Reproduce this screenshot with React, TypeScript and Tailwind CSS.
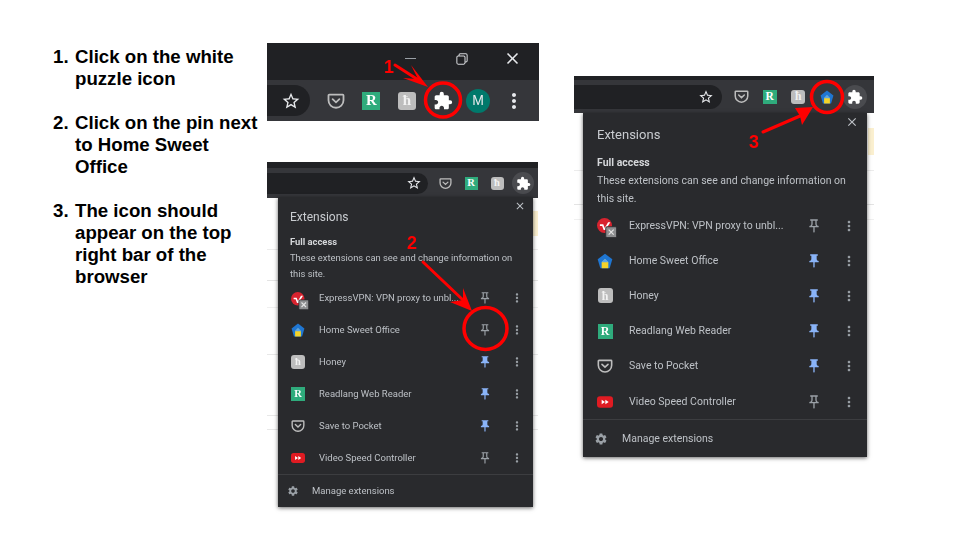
import {
  MdClose,
  MdExtension,
  MdMoreVert,
  MdOutlinePushPin,
  MdPushPin,
  MdSettings,
  MdStarBorder,
} from "react-icons/md";

type IconProps = { className?: string };

const PocketIcon = ({ className }: IconProps) => (
  <svg viewBox="0 0 24 24" className={className} fill="none">
    <path
      d="M3 3.500h18a1 1 0 0 1 1 1V11a10 10 0 0 1-20 0V4.500a1 1 0 0 1 1-1z"
      stroke="#bdbdbd"
      strokeWidth="2.400"
    />
    <path d="M7.500 9.500 12 13.800l4.500-4.300" stroke="#bdbdbd" strokeWidth="2.400" strokeLinecap="round" />
  </svg>
);

const ReadlangIcon = ({ className }: IconProps) => (
  <div className={`flex items-center justify-center bg-[#2fab7c] font-['Liberation_Serif',serif] font-bold leading-none text-white ${className}`}>
    R
  </div>
);

const HoneyIcon = ({ className }: IconProps) => (
  <div className={`flex items-center justify-center rounded-[3px] bg-[#bdbdbd] font-['Liberation_Serif',serif] font-bold leading-none text-[#f2f2f2] ${className}`}>
    ħ
  </div>
);

const HomeIcon = ({ className }: IconProps) => (
  <svg viewBox="0 0 24 24" className={className}>
    <path d="M12 1 23 9.500 19 23H5L1 9.500z" fill="#1f76d2" />
    <path d="M12 9 17 14v9H7v-9z" fill="#f5d328" />
    <path d="M12 8.500 17.500 14H6.500z" fill="#5aa5e8" />
  </svg>
);

const ExpressIcon = ({ className }: IconProps) => (
  <svg viewBox="0 0 24 24" className={className}>
    <circle cx="9" cy="9" r="9" fill="#d8232f" />
    <path d="M3.500 7.500h4l1.800 4.500 4-7h2.700l-6 9.500H8L6.200 9.500H3.500z" fill="#ffffff" />
    <rect x="10.500" y="10.500" width="13" height="13" rx="1.500" fill="#8d8e90" stroke="#292a2d" />
    <path d="M14 14l6 6m0-6-6 6" stroke="#e3e3e3" strokeWidth="1.500" />
  </svg>
);

const VideoIcon = ({ className }: IconProps) => (
  <svg viewBox="0 0 24 24" className={className}>
    <rect x="0" y="3.500" width="24" height="17" rx="4.500" fill="#e01b22" />
    <path d="M7 8.500 12 12l-5 3.500zM12.500 8.500l5 3.500-5 3.500z" fill="#ffffff" />
  </svg>
);

const RestoreIcon = ({ className }: IconProps) => (
  <svg viewBox="0 0 14 14" className={className} fill="none" stroke="#d5d7da" strokeWidth="1.200">
    <rect x="1" y="3.500" width="9.500" height="9.500" rx="1.500" />
    <path d="M3.500 3.500V2.500a1.500 1.500 0 0 1 1.500-1.500h6.500A1.500 1.500 0 0 1 13 2.500V9a1.500 1.500 0 0 1-1.500 1.500h-1" />
  </svg>
);

const sizes = {
  small: {
    panel: "w-[255px] h-[310px]",
    head: "pl-3 pt-3",
    title: "h-4 text-[12px] leading-4",
    access: "mt-[9px] h-4 text-[9.400px] leading-4",
    desc: "w-[235px] text-[9.400px] leading-4",
    row: "h-8 pl-[13px] pr-[9px]",
    cell: "w-[14px]",
    icon: "w-[14px] h-[14px]",
    express: "w-[18px] h-[18px] max-w-[18px] -mr-1 mt-[5px]",
    fontIcon: "w-[14px] h-[14px] text-[10.500px]",
    label: "ml-[14px] text-[9.500px]",
    pin: "w-[14px] h-[14px]",
    dots: "ml-[18px] w-[14px] h-[14px]",
    manage: "h-[33px] pl-[9px]",
    gear: "w-[12px] h-[12px]",
    manageLabel: "ml-[13px] text-[9.500px]",
    close: "right-[7px] top-[3px] w-3 h-3",
  },
  large: {
    panel: "w-[284px] h-[344px]",
    head: "pl-[14px] pt-[13px]",
    title: "h-[18px] text-[13px] leading-[18px]",
    access: "mt-[10px] h-[18px] text-[10.500px] leading-[18px]",
    desc: "w-[262px] text-[10.500px] leading-[18px]",
    row: "h-[35.200px] pl-[14px] pr-[10px]",
    cell: "w-4",
    icon: "w-4 h-4",
    express: "w-5 h-5 max-w-5 -mr-1 mt-[5px]",
    fontIcon: "w-[15px] h-[15px] text-[12px]",
    label: "ml-4 text-[10.500px]",
    pin: "w-4 h-4",
    dots: "ml-[19px] w-4 h-4",
    manage: "h-[37px] pl-[11px]",
    gear: "w-[14px] h-[14px]",
    manageLabel: "ml-[14px] text-[10.500px]",
    close: "right-[8px] top-[2px] w-[14px] h-[14px]",
  },
};

type Size = typeof sizes.small;

const rows = [
  { name: "ExpressVPN: VPN proxy to unbl...", kind: "express" },
  { name: "Home Sweet Office", kind: "home" },
  { name: "Honey", kind: "honey" },
  { name: "Readlang Web Reader", kind: "readlang" },
  { name: "Save to Pocket", kind: "pocket" },
  { name: "Video Speed Controller", kind: "video" },
];

function RowIcon({ kind, s }: { kind: string; s: Size }) {
  if (kind === "express") return <ExpressIcon className={`shrink-0 ${s.express}`} />;
  if (kind === "home") return <HomeIcon className={s.icon} />;
  if (kind === "honey") return <HoneyIcon className={s.fontIcon} />;
  if (kind === "readlang") return <ReadlangIcon className={s.fontIcon} />;
  if (kind === "pocket") return <PocketIcon className={s.icon} />;
  return <VideoIcon className={s.icon} />;
}

function Panel({ s, pinned }: { s: Size; pinned: string[] }) {
  return (
    <div className={`relative flex flex-col bg-[#292a2d] font-['Roboto',sans-serif] text-[#bdc1c6] shadow-[0_1px_4px_rgba(0,0,0,0.6)] ${s.panel}`}>
      <MdClose className={`absolute text-[#bdc1c6] ${s.close}`} />
      <div className={s.head}>
        <div className={`text-[#c9ccd0] ${s.title}`}>Extensions</div>
        <div className={`font-bold text-[#d5d7da] ${s.access}`}>Full access</div>
        <div className={s.desc}>These extensions can see and change information on this site.</div>
      </div>
      <div className="flex flex-col border-b border-[#3c3d40]">
        {rows.map((r) => (
          <div key={r.kind} className={`flex items-center ${s.row}`}>
            <div className={`flex shrink-0 items-center justify-center ${s.cell}`}>
              <RowIcon kind={r.kind} s={s} />
            </div>
            <span className={`flex-1 whitespace-nowrap ${s.label}`}>{r.name}</span>
            {pinned.includes(r.kind) ? (
              <MdPushPin className={`text-[#8ab4f8] ${s.pin}`} />
            ) : (
              <MdOutlinePushPin className={`text-[#9aa0a6] ${s.pin}`} />
            )}
            <MdMoreVert className={`text-[#9aa0a6] ${s.dots}`} />
          </div>
        ))}
      </div>
      <div className={`flex items-center ${s.manage}`}>
        <MdSettings className={`text-[#9aa0a6] ${s.gear}`} />
        <span className={s.manageLabel}>Manage extensions</span>
      </div>
    </div>
  );
}

export default function App() {
  return (
    <div className="relative h-[540px] w-[960px] overflow-hidden bg-white font-['Liberation_Sans',sans-serif]">
      {/* Steps */}
      <ol className="flex flex-col gap-[22px] pl-[53px] pt-[46px] text-[18.670px] font-bold leading-[22px] text-black">
        <li className="flex">
          <span className="w-[22px] shrink-0">1.</span>
          <span>
            Click on the white
            <br />
            puzzle icon
          </span>
        </li>
        <li className="flex">
          <span className="w-[22px] shrink-0">2.</span>
          <span>
            Click on the pin next
            <br />
            to Home Sweet
            <br />
            Office
          </span>
        </li>
        <li className="flex">
          <span className="w-[22px] shrink-0">3.</span>
          <span>
            The icon should
            <br />
            appear on the top
            <br />
            right bar of the
            <br />
            browser
          </span>
        </li>
      </ol>

      {/* Screenshot 1: window controls and toolbar */}
      <div className="absolute left-[267px] top-[43px] w-[272px] blur-[0.5px]">
        <div className="flex h-[37px] items-center justify-end bg-[#202124] pb-[6px] pr-[1px]">
          <div className="flex w-[51px] justify-center">
            <div className="h-[1.500px] w-[11px] bg-[#9aa0a6]" />
          </div>
          <div className="flex w-[51px] justify-center">
            <RestoreIcon className="h-3 w-3" />
          </div>
          <div className="flex w-[51px] justify-center">
            <MdClose className="h-[19px] w-[19px] text-[#e8eaed]" />
          </div>
        </div>
        <div className="flex h-[41px] items-center bg-[#35363a]">
          <div className="flex h-[31px] w-[43px] items-center justify-end rounded-r-full bg-[#202124] pr-[9px]">
            <MdStarBorder className="h-5 w-5 text-[#e8eaed]" />
          </div>
          <div className="ml-2 flex w-[35.600px] justify-center">
            <PocketIcon className="h-[18px] w-[18px]" />
          </div>
          <div className="flex w-[35.600px] justify-center">
            <ReadlangIcon className="h-[18px] w-[18px] text-[15px]" />
          </div>
          <div className="flex w-[35.600px] justify-center">
            <HoneyIcon className="h-[18px] w-[18px] text-[15px]" />
          </div>
          <div className="flex w-[35.600px] justify-center">
            <MdExtension className="h-5 w-5 text-white" />
          </div>
          <div className="flex w-[35.600px] justify-center">
            <div className="flex h-6 w-6 items-center justify-center rounded-full bg-[#00796b] text-[14px] text-[#e8eaed]">M</div>
          </div>
          <div className="flex w-[35.600px] justify-center">
            <MdMoreVert className="h-6 w-6 text-[#e8eaed]" />
          </div>
        </div>
      </div>

      {/* Screenshot 2: menu with unpinned Home Sweet Office */}
      <div className="absolute left-[267px] top-[162px] h-[346px] w-[271px] blur-[0.5px]">
        <div className="h-[6px] bg-[#202124]" />
        <div className="flex h-[30px] items-center bg-[#35363a]">
          <div className="flex h-[21px] w-[161px] items-center justify-end rounded-r-full bg-[#202124] pr-[6px]">
            <MdStarBorder className="h-4 w-4 text-[#e8eaed]" />
          </div>
          <div className="ml-1 flex w-[26px] justify-center">
            <PocketIcon className="h-[13px] w-[13px]" />
          </div>
          <div className="flex w-[26px] justify-center">
            <ReadlangIcon className="h-[13px] w-[13px] text-[10.500px]" />
          </div>
          <div className="flex w-[26px] justify-center">
            <HoneyIcon className="h-[13px] w-[13px] text-[10.500px]" />
          </div>
          <div className="flex w-[26px] justify-center">
            <div className="flex h-[22px] w-[22px] items-center justify-center rounded-full bg-[#4a4b4f]">
              <MdExtension className="h-[15px] w-[15px] text-white" />
            </div>
          </div>
        </div>
        {/* faint page lines behind the menu */}
        <div className="absolute left-0 top-[87px] h-px w-full bg-[#ececec]" />
        <div className="absolute left-0 top-[118px] h-px w-full bg-[#e4e4e4]" />
        <div className="absolute left-0 top-[145px] h-px w-full bg-[#f0f0f0]" />
        <div className="absolute left-0 top-[192px] h-px w-full bg-[#e8e8e8]" />
        <div className="absolute left-0 top-[253px] h-px w-full bg-[#e8e8e8]" />
        <div className="absolute left-0 top-[267px] h-px w-full bg-[#e8e8e8]" />
        <div className="absolute right-0 top-[49px] h-[25px] w-[5px] bg-[#fbf0d0]" />
        <div className="relative -mt-px ml-[11px]">
          <Panel s={sizes.small} pinned={["honey", "readlang", "pocket"]} />
        </div>
      </div>

      {/* Screenshot 3: menu with the icon pinned to the toolbar */}
      <div className="absolute left-[574px] top-[76px] h-[382px] w-[300px] blur-[0.5px]">
        <div className="h-1 bg-[#202124]" />
        <div className="flex h-[33px] items-center bg-[#35363a]">
          <div className="flex h-6 w-[148px] items-center justify-end rounded-r-full bg-[#202124] pr-2">
            <MdStarBorder className="h-4 w-4 text-[#e8eaed]" />
          </div>
          <div className="ml-[5px] flex w-[28.500px] justify-center">
            <PocketIcon className="h-[15px] w-[15px]" />
          </div>
          <div className="flex w-[28.500px] justify-center">
            <ReadlangIcon className="h-[14px] w-[14px] text-[11.500px]" />
          </div>
          <div className="flex w-[28.500px] justify-center">
            <HoneyIcon className="h-[14px] w-[14px] text-[11.500px]" />
          </div>
          <div className="flex w-[28.500px] justify-center">
            <HomeIcon className="h-[14px] w-[14px]" />
          </div>
          <div className="flex w-[28.500px] justify-center">
            <div className="flex h-[24px] w-[24px] items-center justify-center rounded-full bg-[#4a4b4f]">
              <MdExtension className="h-[16px] w-[16px] text-white" />
            </div>
          </div>
        </div>
        <div className="absolute left-0 top-[94px] h-px w-full bg-[#ececec]" />
        <div className="absolute left-0 top-[128px] h-px w-full bg-[#e4e4e4]" />
        <div className="absolute left-0 top-[143px] h-px w-full bg-[#f0f0f0]" />
        <div className="absolute right-0 top-[52px] h-[27px] w-[6px] bg-[#fbf0d0]" />
        <div className="relative ml-[9px]">
          <Panel s={sizes.large} pinned={["home", "honey", "readlang", "pocket"]} />
        </div>
      </div>

      {/* Red annotations */}
      <svg className="absolute left-0 top-0 h-[540px] w-[960px]" viewBox="0 0 960 540" fill="none">
        <g stroke="#ff0000" strokeWidth="3.500">
          <ellipse cx="443" cy="100" rx="17.500" ry="17" />
          <ellipse cx="485.500" cy="328.500" rx="21.500" ry="21" />
          <ellipse cx="827" cy="97" rx="15.500" ry="15.500" />
        </g>
        <g stroke="#ff0000" strokeWidth="3" strokeLinecap="round">
          <path d="M395 65 420 81" />
          <path d="M423 262 463 300" />
          <path d="M763 132 800 116" />
        </g>
        <g fill="#ff0000">
          <path d="M428 87 411 65 418 79 403 78z" />
          <path d="M472 311 463 288 463 300 450 302z" />
          <path d="M813 107 795 108 800 116 802 125z" />
        </g>
      </svg>
      <span className="absolute left-[384px] top-[57px] text-[18px] font-bold leading-[20px] text-[#ff0000]">1</span>
      <span className="absolute left-[407px] top-[233px] text-[18px] font-bold leading-[20px] text-[#ff0000]">2</span>
      <span className="absolute left-[749px] top-[132px] text-[18px] font-bold leading-[20px] text-[#ff0000]">3</span>
    </div>
  );
}
